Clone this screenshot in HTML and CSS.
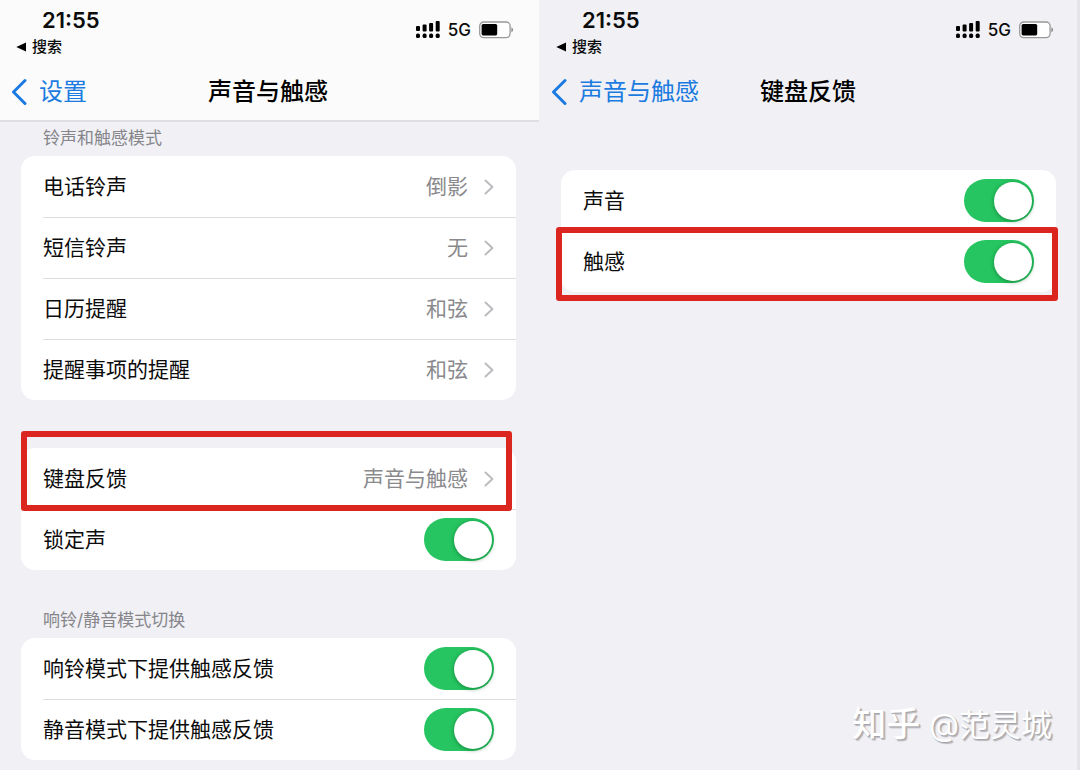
FILE: index.html
```html
<!DOCTYPE html>
<html lang="zh-CN">
<head>
<meta charset="utf-8">
<meta name="viewport" content="width=device-width, initial-scale=1">
<title>声音与触感</title>
<link rel="stylesheet" href="styles.css">
</head>
<body>
<svg class="defs" aria-hidden="true">
  <symbol id="signal" viewBox="0 0 24 18">
    <rect x="0" y="5" width="4" height="5" rx="1"/>
    <rect x="6.6" y="3.6" width="4" height="6.8" rx="1"/>
    <rect x="13.1" y="2" width="4" height="8.6" rx="1"/>
    <rect x="19.7" y="0" width="4" height="10.6" rx="1"/>
    <rect x="0" y="12.6" width="4" height="4.4" rx="1.6"/>
    <rect x="6.6" y="12.6" width="4" height="4.4" rx="1.6"/>
    <rect x="13.1" y="12.6" width="4" height="4.4" rx="1.6"/>
    <rect x="19.7" y="12.6" width="4" height="4.4" rx="1.6"/>
  </symbol>
  <symbol id="battery" viewBox="0 0 35 18">
    <rect x="0.7" y="1" width="30.4" height="15.6" rx="4" fill="#fff" stroke="#999" stroke-width="1.3"/>
    <rect x="2.6" y="3" width="15.6" height="11.4" rx="1.6"/>
    <path d="M32.4 6.6c2.2.6 2.2 4 0 4.6z" fill="#888"/>
  </symbol>
  <symbol id="back" viewBox="0 0 16 28">
    <path d="M14 2.5 2.5 14 14 25.5" fill="none" stroke="currentColor" stroke-width="3" stroke-linecap="round" stroke-linejoin="round"/>
  </symbol>
  <symbol id="chevron" viewBox="0 0 10 16">
    <path d="M1.5 1.5 8.4 8 1.5 14.5" fill="none" stroke="currentColor" stroke-width="2" stroke-linecap="round" stroke-linejoin="round"/>
  </symbol>
  <symbol id="triangle" viewBox="0 0 10 10">
    <path d="M10 .5v9L.3 5z"/>
  </symbol>
</svg>
<main class="screens">
  <section class="screen">
    <header class="bar bar-solid">
      <div class="status">
        <div>
          <time class="time">21:55</time>
          <a class="return" href="#"><svg class="triangle"><use href="#triangle"/></svg>搜索</a>
        </div>
        <div class="indicators">
          <svg class="signal"><use href="#signal"/></svg>
          <span class="network">5G</span>
          <svg class="battery"><use href="#battery"/></svg>
        </div>
      </div>
      <nav class="nav">
        <a class="back" href="#"><svg class="back-icon"><use href="#back"/></svg>设置</a>
        <h1 class="title">声音与触感</h1>
      </nav>
    </header>
    <div class="content">
      <h2 class="caption">铃声和触感模式</h2>
      <div class="card">
        <a class="row" href="#"><span class="name">电话铃声</span><span class="value">倒影</span><svg class="chevron"><use href="#chevron"/></svg></a>
        <a class="row" href="#"><span class="name">短信铃声</span><span class="value">无</span><svg class="chevron"><use href="#chevron"/></svg></a>
        <a class="row" href="#"><span class="name">日历提醒</span><span class="value">和弦</span><svg class="chevron"><use href="#chevron"/></svg></a>
        <a class="row" href="#"><span class="name">提醒事项的提醒</span><span class="value">和弦</span><svg class="chevron"><use href="#chevron"/></svg></a>
      </div>
      <div class="card card-spaced">
        <a class="row marked marked-feedback" href="#"><span class="name">键盘反馈</span><span class="value">声音与触感</span><svg class="chevron"><use href="#chevron"/></svg></a>
        <label class="row"><span class="name">锁定声</span><input class="switch" type="checkbox" role="switch" checked></label>
      </div>
      <h2 class="caption caption-spaced">响铃/静音模式切换</h2>
      <div class="card">
        <label class="row"><span class="name">响铃模式下提供触感反馈</span><input class="switch" type="checkbox" role="switch" checked></label>
        <label class="row"><span class="name">静音模式下提供触感反馈</span><input class="switch" type="checkbox" role="switch" checked></label>
      </div>
    </div>
  </section>
  <section class="screen screen-edge">
    <header class="bar">
      <div class="status">
        <div>
          <time class="time">21:55</time>
          <a class="return" href="#"><svg class="triangle"><use href="#triangle"/></svg>搜索</a>
        </div>
        <div class="indicators">
          <svg class="signal"><use href="#signal"/></svg>
          <span class="network">5G</span>
          <svg class="battery"><use href="#battery"/></svg>
        </div>
      </div>
      <nav class="nav">
        <a class="back" href="#"><svg class="back-icon"><use href="#back"/></svg>声音与触感</a>
        <h1 class="title">键盘反馈</h1>
      </nav>
    </header>
    <div class="content">
      <div class="card card-spaced">
        <label class="row"><span class="name">声音</span><input class="switch" type="checkbox" role="switch" checked></label>
        <label class="row marked marked-haptic"><span class="name">触感</span><input class="switch" type="checkbox" role="switch" checked></label>
      </div>
    </div>
    <p class="watermark"><span class="brand">知乎</span> @范灵城</p>
  </section>
</main>
</body>
</html>
```
FILE: styles.css
```css
* {
  box-sizing: border-box;
}

body {
  margin: 0;
  background: #f0f0f5;
  color: #0c0c0c;
  font-family: Inter, "Noto Sans CJK SC", sans-serif;
}

h1,
h2,
p {
  margin: 0;
}

a {
  color: inherit;
  text-decoration: none;
}

svg {
  display: block;
  flex: none;
}

.defs {
  position: absolute;
  width: 0;
  height: 0;
}

.screens {
  display: grid;
  grid-template-columns: 1fr 1fr;
  min-height: 100vh;
}

.screen {
  position: relative;
  min-width: 0;
}

.screen-edge {
  box-shadow: inset -3px 0 #e6e4e8;
}

.bar {
  border-bottom: 2px solid transparent;
}

.bar-solid {
  margin-right: 1px;
  background: #fbfbfb;
  border-color: #dfdfe3;
}

.status {
  display: flex;
  justify-content: space-between;
  padding: 8px 26px 0 16px;
}

.bar-solid .status {
  padding-right: 25px;
}

.time {
  display: block;
  padding-left: 26px;
  font-size: 22px;
  font-weight: 600;
  line-height: 24px;
}

.return {
  display: flex;
  align-items: center;
  gap: 6px;
  margin-top: 4px;
  font-size: 15px;
  font-weight: 500;
  line-height: 22px;
}

.triangle {
  width: 10px;
  height: 10px;
}

.indicators {
  display: flex;
  align-items: center;
  align-self: flex-start;
  gap: 8px;
  padding-top: 12px;
}

.signal {
  width: 24px;
  height: 18px;
}

.network {
  font-size: 17px;
  font-weight: 500;
  line-height: 20px;
}

.battery {
  width: 35px;
  height: 18px;
}

.nav {
  display: grid;
  grid-template-columns: 1fr auto 1fr;
  align-items: center;
  padding: 16px 15px 10px 11px;
  line-height: 36px;
}

.bar-solid .nav {
  padding-right: 14px;
}

.back {
  display: flex;
  align-items: center;
  gap: 12px;
  color: #1b7be0;
  font-size: 24px;
  white-space: nowrap;
}

.back-icon {
  width: 16px;
  height: 28px;
}

.title {
  color: #000;
  font-size: 24px;
  font-weight: 500;
}

.content {
  padding: 0 24px 10px 21px;
}

.caption {
  padding: 4px 22px 6px;
  color: #85858a;
  font-size: 17px;
  font-weight: 400;
  line-height: 24px;
}

.caption-spaced {
  padding-top: 38px;
}

.card {
  border-radius: 14px;
  background: #fff;
}

.card-spaced {
  margin-top: 48px;
}

.row {
  position: relative;
  display: flex;
  align-items: center;
  height: 61px;
  padding: 0 22px;
  font-size: 21px;
  line-height: 30px;
}

.row + .row::before {
  content: "";
  position: absolute;
  top: 0;
  right: 0;
  left: 22px;
  height: 1px;
  background: #dedee0;
}

.name {
  flex: 1;
}

.value {
  color: #8a8a8d;
}

.chevron {
  width: 10px;
  height: 16px;
  margin-left: 16px;
  color: #bcbcc0;
}

.switch {
  display: flex;
  align-items: center;
  justify-content: flex-end;
  width: 70px;
  height: 43px;
  margin: 0;
  padding: 2px;
  border-radius: 22px;
  background: #26c561;
  appearance: none;
}

.switch::before {
  content: "";
  width: 38px;
  height: 38px;
  border-radius: 50%;
  background: #fff;
  box-shadow: 0 1px 4px rgba(0, 70, 20, 0.5);
}

.marked::after {
  content: "";
  position: absolute;
  z-index: 1;
  border: 6px solid #db251f;
  border-radius: 3px;
  pointer-events: none;
}

.marked-feedback::after {
  inset: -17px 4px -2px 0;
}

.marked-haptic::after {
  inset: -4px -2px -9px -5px;
}

.watermark {
  position: absolute;
  right: 28px;
  bottom: 22px;
  color: #fff;
  font-size: 31px;
  line-height: 46px;
  text-shadow: 1px 1px 1px #a4a4a9, 2px 2px 1px #bcbcc1;
  white-space: nowrap;
}

.brand {
  font-size: 34px;
  font-weight: 500;
}
```
